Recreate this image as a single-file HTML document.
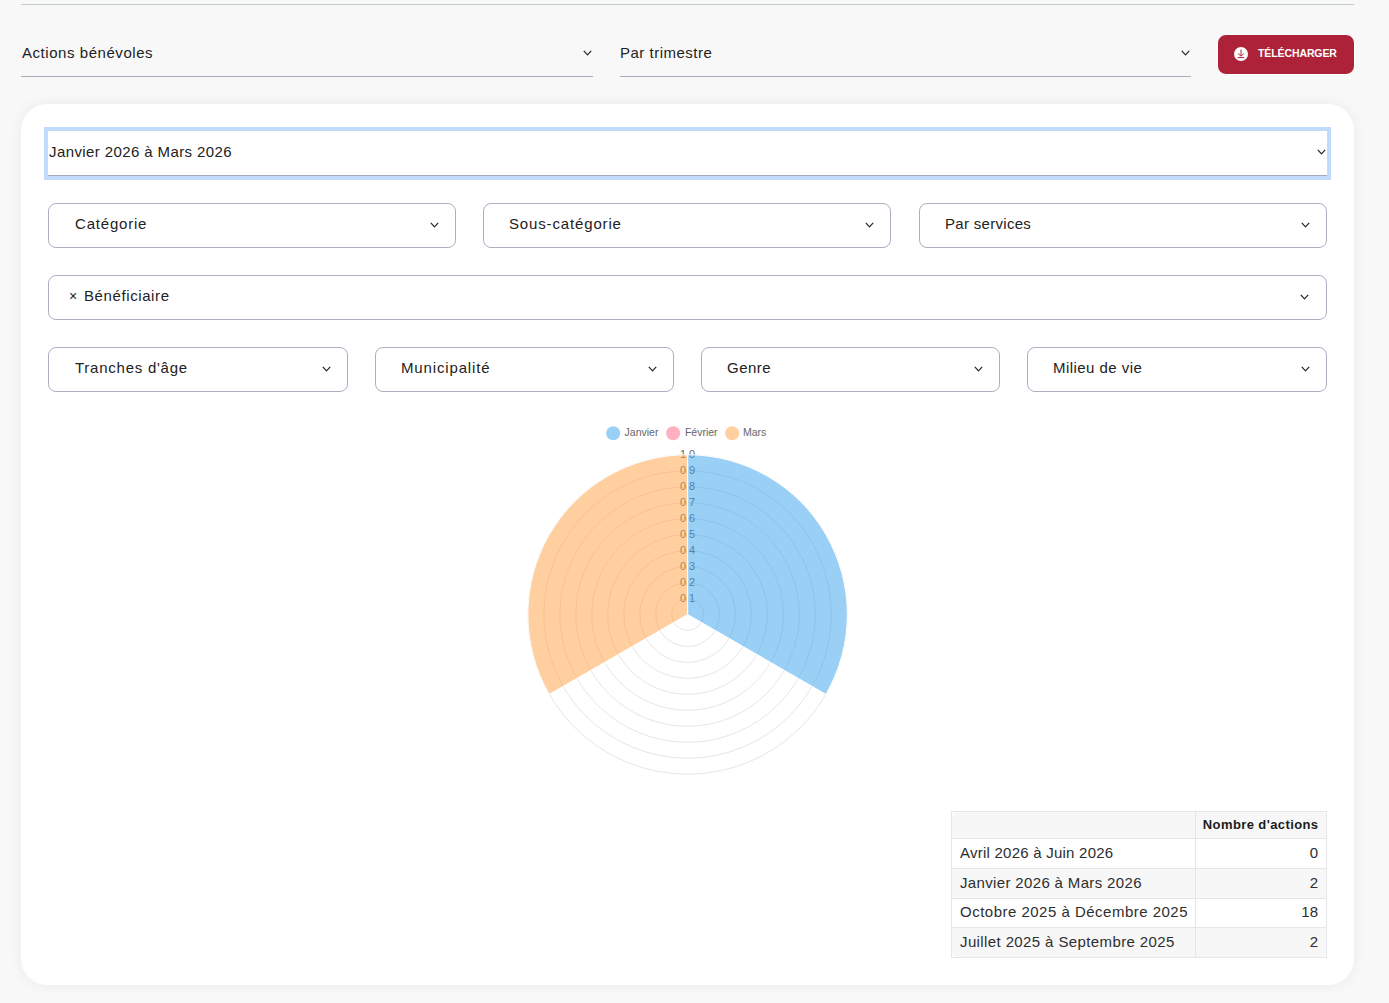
<!DOCTYPE html>
<html><head><meta charset="utf-8">
<style>
*{box-sizing:border-box;margin:0;padding:0}
html,body{width:1389px;height:1003px;overflow:hidden;background:#f8f8f8;font-family:"Liberation Sans",sans-serif;color:#222}
.abs{position:absolute}
.topline{left:21px;top:4px;width:1333px;height:1px;background:#bfcbd0}
.t{position:absolute;font-size:15px;line-height:18px;white-space:nowrap}
.u{border-bottom:1px solid #a8afbc}
.chev{position:absolute}
.btn{left:1217px;top:34px;width:138px;height:41px;background:#ad2238;border:1px solid #fff;border-radius:9px}
.card{left:21px;top:104px;width:1333px;height:881px;background:#fff;border-radius:26px;box-shadow:0 0 14px rgba(0,0,0,0.06)}
.box{position:absolute;border:1px solid #aab0bf;border-radius:8px;background:#fff;height:45px}
.tg{background:#f7f7f7}
.tl{background:#e5e6ea}
.th{font-size:13px;line-height:16px;font-weight:bold;color:#1c1c1c;white-space:nowrap}
.td{color:#2e2e2e}
</style></head><body>
<div class="abs topline"></div>

<div class="abs u" style="left:21px;top:36px;width:572px;height:41px"></div>
<div class="t" style="left:22px;top:44px;letter-spacing:0.55px">Actions bénévoles</div>
<svg class="chev" style="left:583px;top:50px" width="9" height="7" viewBox="0 0 9 7"><path d="M0.8 0.9 L4.5 4.9 L8.2 0.9" fill="none" stroke="#2b2b2b" stroke-width="1.3"/></svg>

<div class="abs u" style="left:620px;top:36px;width:571px;height:41px"></div>
<div class="t" style="left:620px;top:44px;letter-spacing:0.5px">Par trimestre</div>
<svg class="chev" style="left:1181px;top:50px" width="9" height="7" viewBox="0 0 9 7"><path d="M0.8 0.9 L4.5 4.9 L8.2 0.9" fill="none" stroke="#2b2b2b" stroke-width="1.3"/></svg>

<div class="abs btn"></div>
<svg class="abs" style="left:1234px;top:47px" width="14" height="14" viewBox="0 0 14 14"><circle cx="7" cy="7" r="7" fill="#fff"/><path d="M7 2.6 V9.0 M4.1 6.5 L7 9.2 L9.9 6.5 M3.9 10.6 H10.1" fill="none" stroke="#ad2238" stroke-width="1"/></svg>
<div class="abs" style="left:1258px;top:47px;font-size:10.5px;line-height:12px;font-weight:bold;color:#fff;letter-spacing:-0.1px">TÉLÉCHARGER</div>

<div class="abs card"></div>

<div class="abs" style="left:44px;top:127px;width:1287px;height:53px;background:#c2dbfd"></div>
<div class="abs" style="left:48px;top:131px;width:1279px;height:45px;background:#fff;border-bottom:1px solid #a3aab8"></div>
<div class="t" style="left:49px;top:143px;letter-spacing:0.4px">Janvier 2026 à Mars 2026</div>
<svg class="chev" style="left:1317px;top:149px" width="9" height="7" viewBox="0 0 9 7"><path d="M0.8 0.9 L4.5 4.9 L8.2 0.9" fill="none" stroke="#2b2b2b" stroke-width="1.3"/></svg>

<div class="box" style="left:48px;top:203px;width:408px"></div><div class="t" style="left:75px;top:215px;letter-spacing:0.8px">Catégorie</div><svg class="chev" style="left:430px;top:222px" width="9" height="7" viewBox="0 0 9 7"><path d="M0.8 0.9 L4.5 4.9 L8.2 0.9" fill="none" stroke="#2b2b2b" stroke-width="1.3"/></svg>
<div class="box" style="left:483px;top:203px;width:408px"></div><div class="t" style="left:509px;top:215px;letter-spacing:0.85px">Sous-catégorie</div><svg class="chev" style="left:865px;top:222px" width="9" height="7" viewBox="0 0 9 7"><path d="M0.8 0.9 L4.5 4.9 L8.2 0.9" fill="none" stroke="#2b2b2b" stroke-width="1.3"/></svg>
<div class="box" style="left:919px;top:203px;width:408px"></div><div class="t" style="left:945px;top:215px;letter-spacing:0.3px">Par services</div><svg class="chev" style="left:1301px;top:222px" width="9" height="7" viewBox="0 0 9 7"><path d="M0.8 0.9 L4.5 4.9 L8.2 0.9" fill="none" stroke="#2b2b2b" stroke-width="1.3"/></svg>

<div class="box" style="left:48px;top:275px;width:1279px"></div>
<div class="t" style="left:69px;top:287px;font-size:14px">×</div>
<div class="t" style="left:84px;top:287px;letter-spacing:0.6px">Bénéficiaire</div>
<svg class="chev" style="left:1300px;top:294px" width="9" height="7" viewBox="0 0 9 7"><path d="M0.8 0.9 L4.5 4.9 L8.2 0.9" fill="none" stroke="#2b2b2b" stroke-width="1.3"/></svg>

<div class="box" style="left:48px;top:347px;width:300px"></div><div class="t" style="left:75px;top:359px;letter-spacing:0.75px">Tranches d'âge</div><svg class="chev" style="left:322px;top:366px" width="9" height="7" viewBox="0 0 9 7"><path d="M0.8 0.9 L4.5 4.9 L8.2 0.9" fill="none" stroke="#2b2b2b" stroke-width="1.3"/></svg>
<div class="box" style="left:375px;top:347px;width:299px"></div><div class="t" style="left:401px;top:359px;letter-spacing:0.85px">Municipalité</div><svg class="chev" style="left:648px;top:366px" width="9" height="7" viewBox="0 0 9 7"><path d="M0.8 0.9 L4.5 4.9 L8.2 0.9" fill="none" stroke="#2b2b2b" stroke-width="1.3"/></svg>
<div class="box" style="left:701px;top:347px;width:299px"></div><div class="t" style="left:727px;top:359px;letter-spacing:0.5px">Genre</div><svg class="chev" style="left:974px;top:366px" width="9" height="7" viewBox="0 0 9 7"><path d="M0.8 0.9 L4.5 4.9 L8.2 0.9" fill="none" stroke="#2b2b2b" stroke-width="1.3"/></svg>
<div class="box" style="left:1027px;top:347px;width:300px"></div><div class="t" style="left:1053px;top:359px;letter-spacing:0.45px">Milieu de vie</div><svg class="chev" style="left:1301px;top:366px" width="9" height="7" viewBox="0 0 9 7"><path d="M0.8 0.9 L4.5 4.9 L8.2 0.9" fill="none" stroke="#2b2b2b" stroke-width="1.3"/></svg>

<svg class="abs" style="left:0;top:0" width="1389" height="1003" viewBox="0 0 1389 1003">
<g fill="none" stroke="#e6e6e6" stroke-width="1"><circle cx="687.6" cy="614.5" r="15.97"/><circle cx="687.6" cy="614.5" r="31.94"/><circle cx="687.6" cy="614.5" r="47.91"/><circle cx="687.6" cy="614.5" r="63.88"/><circle cx="687.6" cy="614.5" r="79.85"/><circle cx="687.6" cy="614.5" r="95.82"/><circle cx="687.6" cy="614.5" r="111.79"/><circle cx="687.6" cy="614.5" r="127.76"/><circle cx="687.6" cy="614.5" r="143.73"/><circle cx="687.6" cy="614.5" r="159.70"/></g>
<g font-family="Liberation Sans" font-size="11" fill="#666" text-anchor="middle"><text x="687.6" y="601.8">0.1</text><text x="687.6" y="585.9">0.2</text><text x="687.6" y="569.9">0.3</text><text x="687.6" y="553.9">0.4</text><text x="687.6" y="537.9">0.5</text><text x="687.6" y="522.0">0.6</text><text x="687.6" y="506.0">0.7</text><text x="687.6" y="490.0">0.8</text><text x="687.6" y="474.1">0.9</text><text x="687.6" y="458.1">1.0</text></g>
<path d="M687.6,614.5 L687.6,454.80 A159.7,159.7 0 0 1 825.90,694.35 Z" fill="rgba(54,162,235,0.5)" stroke="#fff" stroke-width="1"/>
<path d="M687.6,614.5 L549.30,694.35 A159.7,159.7 0 0 1 687.6,454.80 Z" fill="rgba(255,159,64,0.5)" stroke="#fff" stroke-width="1"/>
<circle cx="613.2" cy="433.2" r="7" fill="rgba(54,162,235,0.5)"/>
<circle cx="673.2" cy="433.2" r="7" fill="rgba(255,99,132,0.5)"/>
<circle cx="732.2" cy="433.2" r="7" fill="rgba(255,159,64,0.5)"/>
<g font-family="Liberation Sans" font-size="10.5" fill="#666">
<text x="624.6" y="435.9">Janvier</text><text x="684.9" y="435.9">Février</text><text x="742.9" y="435.9">Mars</text></g>
</svg>

<div class="abs" style="left:951px;top:811px;width:376px;height:147px;border:1px solid #e5e6ea;background:#fff"></div><div class="abs tg" style="left:952px;top:812px;width:374px;height:26px;border-radius:5px 5px 0 0"></div><div class="abs tg" style="left:952px;top:869px;width:374px;height:29px"></div><div class="abs tg" style="left:952px;top:928px;width:374px;height:29px;border-radius:0 0 5px 5px"></div><div class="abs tl" style="left:951px;top:838px;width:376px;height:1px"></div><div class="abs tl" style="left:951px;top:868px;width:376px;height:1px"></div><div class="abs tl" style="left:951px;top:898px;width:376px;height:1px"></div><div class="abs tl" style="left:951px;top:927px;width:376px;height:1px"></div><div class="abs tl" style="left:1195px;top:811px;width:1px;height:147px"></div><div class="abs th" style="right:70.5px;top:817px;letter-spacing:0.4px">Nombre d'actions</div><div class="t td" style="left:960px;top:844px;letter-spacing:0.24px">Avril 2026 à Juin 2026</div><div class="t td" style="right:71px;top:844px">0</div><div class="t td" style="left:960px;top:874px;letter-spacing:0.35px">Janvier 2026 à Mars 2026</div><div class="t td" style="right:71px;top:874px">2</div><div class="t td" style="left:960px;top:903px;letter-spacing:0.49px">Octobre 2025 à Décembre 2025</div><div class="t td" style="right:71px;top:903px">18</div><div class="t td" style="left:960px;top:933px;letter-spacing:0.39px">Juillet 2025 à Septembre 2025</div><div class="t td" style="right:71px;top:933px">2</div>

</body></html>
